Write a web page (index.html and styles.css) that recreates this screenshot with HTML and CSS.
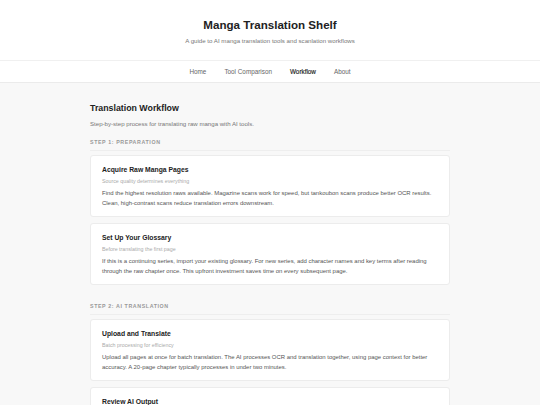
FILE: index.html
```html
<!DOCTYPE html>
<html lang="en">
<head>
<meta charset="utf-8">
<title>Manga Translation Shelf</title>
<link rel="stylesheet" href="styles.css">
</head>
<body>
<header class="site-header">
  <h1 class="site-title">Manga Translation Shelf</h1>
  <p class="site-tagline">A guide to AI manga translation tools and scanlation workflows</p>
</header>
<nav class="site-nav">
  <a class="nav-link" href="#">Home</a>
  <a class="nav-link" href="#">Tool Comparison</a>
  <a class="nav-link active" href="#">Workflow</a>
  <a class="nav-link" href="#">About</a>
</nav>
<main class="content">
  <h2 class="page-title">Translation Workflow</h2>
  <p class="page-desc">Step-by-step process for translating raw manga with AI tools.</p>

  <section class="step">
    <h3 class="step-label">Step 1: Preparation</h3>
    <div class="cards">
      <article class="card">
        <h4 class="card-title">Acquire Raw Manga Pages</h4>
        <p class="card-sub">Source quality determines everything</p>
        <p class="card-body">Find the highest resolution raws available. Magazine scans work for speed, but tankoubon scans produce better OCR results. Clean, high-contrast scans reduce translation errors downstream.</p>
      </article>
      <article class="card">
        <h4 class="card-title">Set Up Your Glossary</h4>
        <p class="card-sub">Before translating the first page</p>
        <p class="card-body">If this is a continuing series, import your existing glossary. For new series, add character names and key terms after reading through the raw chapter once. This upfront investment saves time on every subsequent page.</p>
      </article>
    </div>
  </section>

  <section class="step">
    <h3 class="step-label">Step 2: AI Translation</h3>
    <div class="cards">
      <article class="card">
        <h4 class="card-title">Upload and Translate</h4>
        <p class="card-sub">Batch processing for efficiency</p>
        <p class="card-body">Upload all pages at once for batch translation. The AI processes OCR and translation together, using page context for better accuracy. A 20-page chapter typically processes in under two minutes.</p>
      </article>
      <article class="card">
        <h4 class="card-title">Review AI Output</h4>
        <p class="card-sub">Check every bubble before typesetting</p>
        <p class="card-body">Read through each translated page and compare against the original. Watch for mistranslated honorifics, dropped sound effects and names that drift from the glossary.</p>
      </article>
    </div>
  </section>
</main>
</body>
</html>
```
FILE: styles.css
```css
* { box-sizing: border-box; }
html, body { margin: 0; padding: 0; }
body {
  font-family: "Liberation Sans", Arial, sans-serif;
  background: #f8f8f8;
  color: #333;
}
.site-header {
  background: #fff;
  text-align: center;
  padding: 16.5px 0 15px;
  border-bottom: 1px solid #f0f0f0;
}
.site-title {
  margin: 0;
  font-size: 11.6px;
  line-height: 15px;
  font-weight: bold;
  color: #222;
}
.site-tagline {
  margin: 5px 0 0;
  font-size: 6.15px;
  line-height: 8px;
  color: #777;
}
.site-nav {
  background: #fff;
  display: flex;
  justify-content: center;
  gap: 18px;
  height: 22px;
  align-items: center;
  border-bottom: 1px solid #ebebeb;
}
.nav-link {
  font-size: 6.35px;
  color: #666;
  text-decoration: none;
}
.nav-link.active {
  color: #1f1f1f;
  -webkit-text-stroke: 0.15px #1f1f1f;
}
.content {
  width: 360px;
  margin: 0 auto;
  padding-top: 20.5px;
}
.page-title {
  margin: 0;
  font-size: 8.8px;
  line-height: 11px;
  color: #222;
}
.page-desc {
  margin: 5px 0 0;
  font-size: 6.1px;
  line-height: 9px;
  color: #777;
}
.step { margin-top: 9.5px; }
.step + .step { margin-top: 16.5px; }
.step-label {
  margin: 0;
  font-size: 5.3px;
  line-height: 8px;
  letter-spacing: 0.6px;
  text-transform: uppercase;
  color: #999;
  font-weight: bold;
  padding-bottom: 4px;
  border-bottom: 1px solid #eeeeee;
}
.cards {
  display: flex;
  flex-direction: column;
  gap: 6px;
  margin-top: 4.5px;
}
.card {
  background: #fff;
  border: 1px solid #ececec;
  border-radius: 3px;
  padding: 9px 11px 8px;
}
.card-title {
  margin: 0;
  font-size: 6.8px;
  line-height: 9px;
  color: #222;
}
.card-sub {
  margin: 3px 0 0;
  font-size: 5.3px;
  line-height: 8px;
  color: #aaa;
}
.card-body {
  margin: 3px 0 0;
  font-size: 5.95px;
  line-height: 10px;
  color: #555;
}
```
